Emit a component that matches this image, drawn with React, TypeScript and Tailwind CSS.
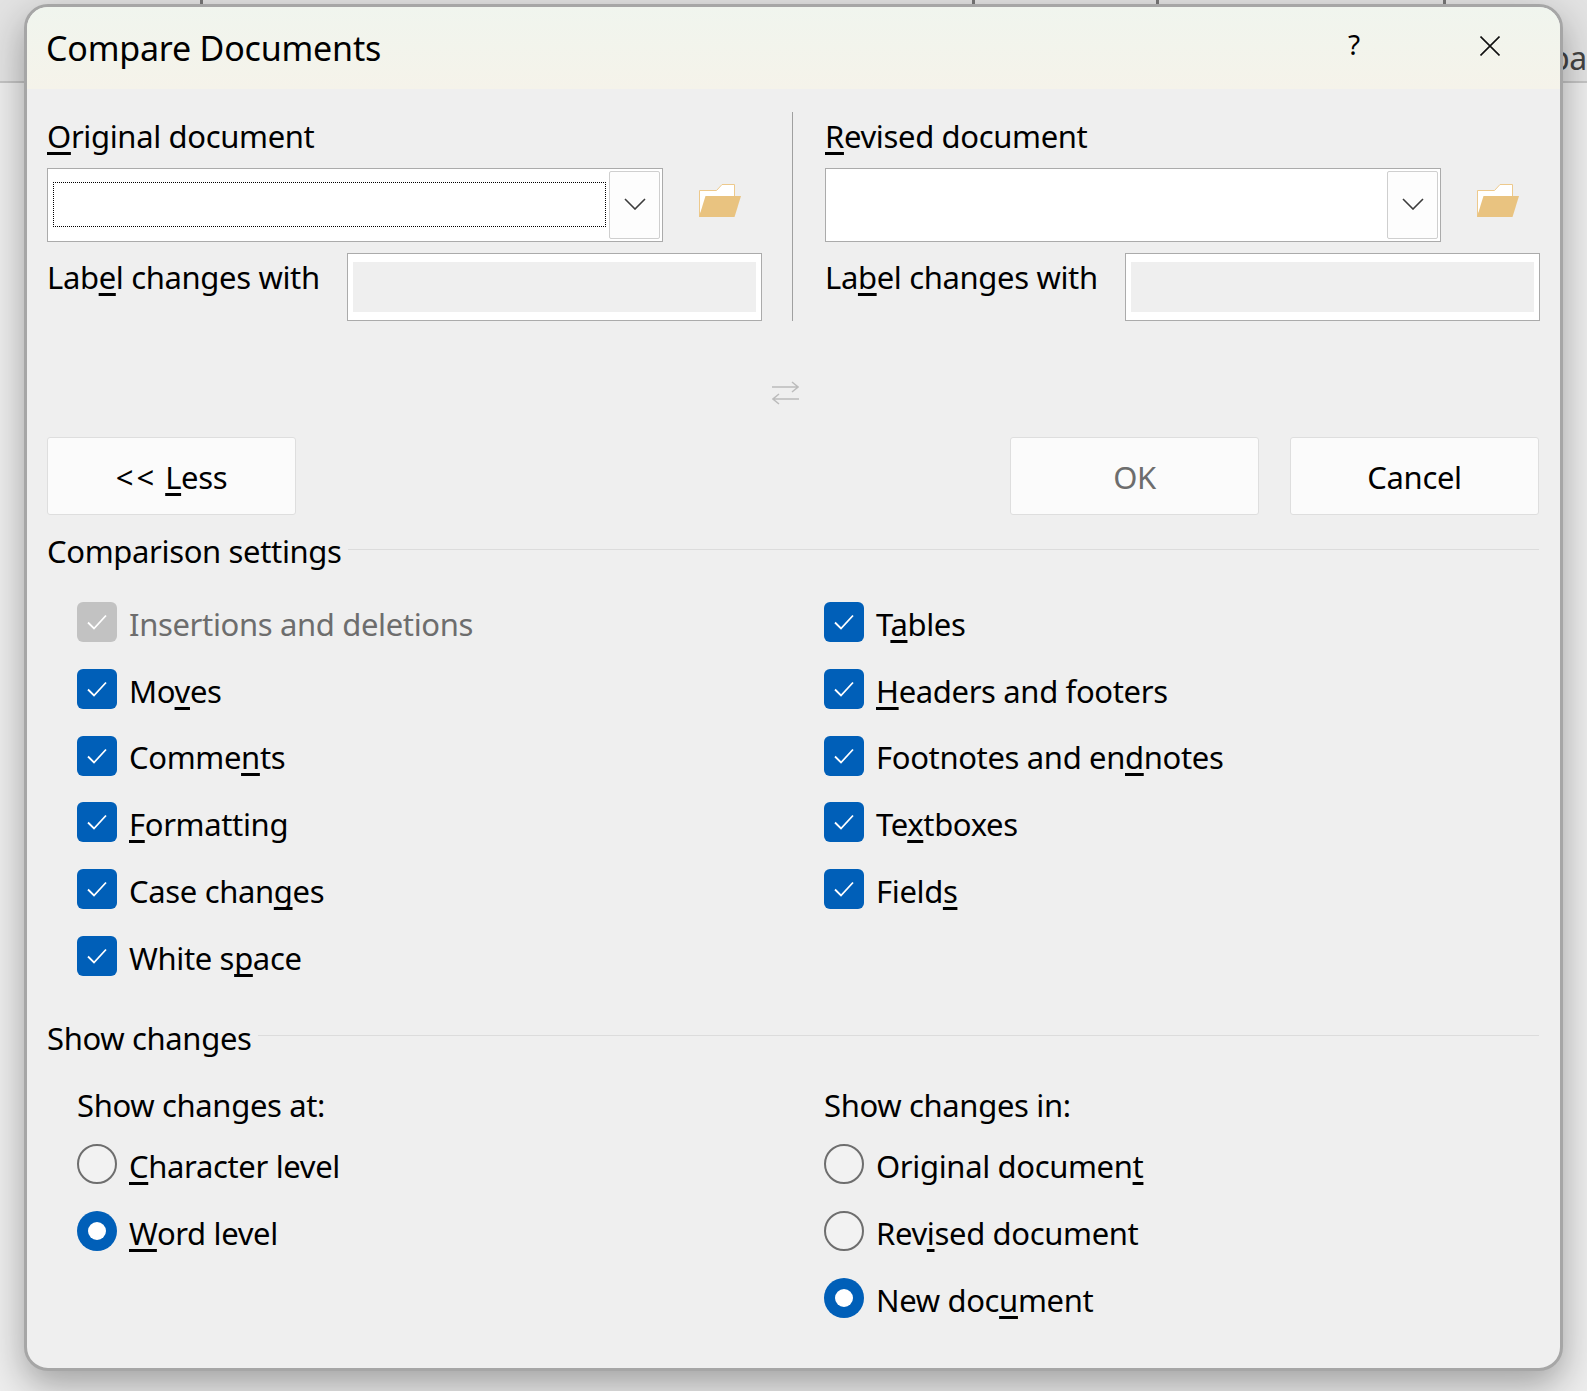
import type { ReactNode } from 'react';

const FONT = "font-['Noto_Sans',sans-serif]";

function Acc({ children }: { children: ReactNode }) {
  return <span className="underline decoration-[3px] underline-offset-[4px] [text-decoration-skip-ink:none]">{children}</span>;
}

function Folder({ className }: { className: string }) {
  return (
    <svg viewBox="0 0 42 33" className={className}>
      <path d="M0.5 32.5V6.5H17.5L23 0.5H35.5V14H8L0.5 32.5Z" fill="#fff" stroke="#edc98c" />
      <path d="M6.5 12H42L35.5 33H0Z" fill="#e9c380" />
    </svg>
  );
}

function Chevron() {
  return (
    <svg viewBox="0 0 22 12" className="mb-[2px] h-3 w-[22px] text-[#3c3c3c]" fill="none" stroke="currentColor" strokeWidth="1.6">
      <path d="M1 1L11 11L21 1" />
    </svg>
  );
}

function FileColumn({ title, focused }: { title: ReactNode; focused?: boolean }) {
  return (
    <div className="w-[715px] shrink-0">
      <div className="h-[50px] pt-px leading-[46px]">{title}</div>
      <div className="mt-[6px] flex items-center">
        <div className="flex h-[74px] w-[616px] items-center border border-[#ababab] bg-white pl-[5px] pr-[2px]">
          {focused ? <div className="mb-[2px] h-[45px] flex-1 border border-dotted border-black" /> : <div className="flex-1" />}
          <div className="ml-[3px] flex h-[68px] w-[51px] items-center justify-center rounded-[2px] border border-[#cfcfcf] bg-[#fdfdfd]">
            <Chevron />
          </div>
        </div>
        <Folder className="mb-[10px] ml-[36px] h-[33px] w-[42px]" />
      </div>
      <div className="mt-[11px] flex items-start justify-between">
        <span className="pt-px leading-[46px]">
          {focused ? <>Lab<Acc>e</Acc>l changes with</> : <>La<Acc>b</Acc>el changes with</>}
        </span>
        <div className="h-[68px] w-[415px] border border-[#ababab] bg-white px-[5px] py-[8px]">
          <div className="h-full bg-[#efefef]" />
        </div>
      </div>
    </div>
  );
}

function Check({ children, disabled }: { children: ReactNode; disabled?: boolean }) {
  return (
    <div className={`flex h-10 items-center gap-3 ${disabled ? 'text-[#6d6d6d]' : ''}`}>
      <span className={`flex h-10 w-10 items-center justify-center rounded-[6px] ${disabled ? 'bg-[#c2c2c2]' : 'bg-[#005fb8]'}`}>
        <svg viewBox="0 0 20 16" className="h-4 w-5" fill="none" stroke="#fff" strokeWidth="1.8">
          <path d="M1 8.5L7 14.5L19 1.5" />
        </svg>
      </span>
      <span className="pt-[4px]">{children}</span>
    </div>
  );
}

function Radio({ children, on }: { children: ReactNode; on?: boolean }) {
  return (
    <div className="flex h-10 items-center gap-3">
      {on ? (
        <span className="flex h-10 w-10 items-center justify-center rounded-full bg-[#005fb8]">
          <span className="h-[18px] w-[18px] rounded-full bg-white" />
        </span>
      ) : (
        <span className="h-10 w-10 rounded-full border-2 border-[#6e6e6e] bg-[#f2f2f2]" />
      )}
      <span className="pt-[4px]">{children}</span>
    </div>
  );
}

function SectionHead({ children }: { children: ReactNode }) {
  return (
    <div className="flex h-11 items-center gap-[6px]">
      <span className="pb-[2px]">{children}</span>
      <div className="mb-[6px] h-px flex-1 bg-[#dcdcdc]" />
    </div>
  );
}

function Button({ children, muted }: { children: ReactNode; muted?: boolean }) {
  return (
    <div className={`flex h-[78px] w-[249px] items-center justify-center rounded-[3px] border border-[#dedede] bg-[#fbfbfb] pt-[2px] ${muted ? 'text-[#6d6d6d]' : ''}`}>
      {children}
    </div>
  );
}

export default function App() {
  return (
    <div className={`relative h-[1391px] w-[1587px] overflow-hidden bg-[#ededed] pl-6 pt-1 text-[31px] tracking-[-0.35px] text-black ${FONT}`}>
      {/* window behind the dialog */}
      <div className="absolute inset-x-0 top-0 h-[83px] border-b-2 border-[#c4c4c4] bg-[#e2e2e2]">
        <div className="absolute left-[200px] top-0 h-[5px] w-[3px] bg-[#777]" />
        <div className="absolute left-[972px] top-0 h-[5px] w-[3px] bg-[#777]" />
        <div className="absolute left-[1156px] top-0 h-[5px] w-[3px] bg-[#777]" />
        <div className="absolute left-[1443px] top-0 h-[5px] w-[3px] bg-[#777]" />
        <span className="absolute left-[1550px] top-[34px] text-[32px] text-[#444]">pa</span>
      </div>

      <div className="relative h-[1367px] w-[1539px] overflow-hidden rounded-[24px] border-[3px] border-[#a6a6a6] bg-[#efefef] shadow-[0_14px_36px_rgba(0,0,0,0.32)]">
        <div className="relative flex h-[82px] items-center bg-gradient-to-b from-[#f0f5ee] to-[#f5f3ea] pl-[19px]">
          <span className="text-[34px] tracking-[-0.2px]">Compare Documents</span>
          <span className="absolute left-[1321px] top-[18px] text-[28px] leading-[38px]">?</span>
          <svg viewBox="0 0 20 20" className="absolute left-[1453px] top-[29px] h-5 w-5" fill="none" stroke="#111" strokeWidth="1.6">
            <path d="M0.5 0.5L19.5 19.5M19.5 0.5L0.5 19.5" />
          </svg>
        </div>

        <div className="pl-5 pr-[21px]">
          <div className="mt-[23px] flex items-start">
            <FileColumn focused title={<><Acc>O</Acc>riginal document</>} />
            <div className="ml-[30px] mr-[32px] h-[209px] w-px shrink-0 bg-[#a0a0a0]" />
            <FileColumn title={<><Acc>R</Acc>evised document</>} />
          </div>

          <div className="mt-[60px] flex justify-center pr-4">
            <svg viewBox="0 0 27 24" className="h-6 w-[27px]" fill="none" stroke="#bcbcbc" strokeWidth="1.5">
              <path d="M0 6H26M20 1L26 6L20 11M27 18H1M7 13L1 18L7 23" />
            </svg>
          </div>

          <div className="mt-[32px] flex items-center">
            <Button><span className="tracking-[3px]">&lt;&lt;</span><span className="ml-2"><Acc>L</Acc>ess</span></Button>
            <div className="ml-auto flex gap-[31px]">
              <Button muted>OK</Button>
              <Button>Cancel</Button>
            </div>
          </div>

          <div className="mt-[15px]">
            <SectionHead>Comparison settings</SectionHead>
          </div>

          <div className="mt-[28px] grid grid-cols-[747px_1fr] gap-y-[26.8px] pl-[30px]">
            <Check disabled>Insertions and deletions</Check>
            <Check>T<Acc>a</Acc>bles</Check>
            <Check>Mo<Acc>v</Acc>es</Check>
            <Check><Acc>H</Acc>eaders and footers</Check>
            <Check>Comme<Acc>n</Acc>ts</Check>
            <Check>Footnotes and en<Acc>d</Acc>notes</Check>
            <Check><Acc>F</Acc>ormatting</Check>
            <Check>Te<Acc>x</Acc>tboxes</Check>
            <Check>Case chan<Acc>g</Acc>es</Check>
            <Check>Field<Acc>s</Acc></Check>
            <Check>White s<Acc>p</Acc>ace</Check>
          </div>

          <div className="mt-[41px]">
            <SectionHead>Show changes</SectionHead>
          </div>

          <div className="mt-[22px] grid grid-cols-[747px_1fr] pl-[30px]">
            <div>
              <div className="h-[44px] leading-[44px]">Show changes at:</div>
              <div className="mt-[17px] flex flex-col gap-[27px]">
                <Radio><Acc>C</Acc>haracter level</Radio>
                <Radio on><Acc>W</Acc>ord level</Radio>
              </div>
            </div>
            <div>
              <div className="h-[44px] leading-[44px]">Show changes in:</div>
              <div className="mt-[17px] flex flex-col gap-[27px]">
                <Radio>Original documen<Acc>t</Acc></Radio>
                <Radio>Rev<Acc>i</Acc>sed document</Radio>
                <Radio on>New doc<Acc>u</Acc>ment</Radio>
              </div>
            </div>
          </div>
        </div>
      </div>
    </div>
  );
}
